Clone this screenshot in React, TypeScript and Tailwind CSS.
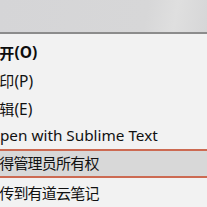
import React from "react";

const rows: { cjk: string; latin?: string; h: string; bold?: boolean; hl?: boolean }[] = [
  { cjk: "打开", latin: "(O)", h: "h-[28px]", bold: true },
  { cjk: "打印", latin: "(P)", h: "h-[29px]" },
  { cjk: "编辑", latin: "(E)", h: "h-[27px]" },
  { cjk: "", latin: "Open with Sublime Text", h: "h-[26px]" },
  { cjk: "取得管理员所有权", h: "h-[29px]", hl: true },
  { cjk: "上传到有道云笔记", h: "h-[30px]" },
];

export default function App() {
  return (
    <div
      className="w-[207px] h-[207px] overflow-hidden bg-[#f2f2f2] flex flex-col"
      style={{ fontFamily: '"Noto Sans", "Noto Sans CJK SC", sans-serif' }}
    >
      <div className="h-[32px] shrink-0 bg-[linear-gradient(100deg,#d5d5d7_0%,#d7d7d8_70%,#dfdfdf_84%,#d6d6d7_100%)]" />
      <div className="h-[2px] shrink-0 bg-[#8c8c8c]" />
      <div className="h-[5px] shrink-0" />
      {rows.map((r) => (
        <div
          key={r.cjk + (r.latin ?? "")}
          className={
            r.hl
              ? `${r.h} shrink-0 flex items-center bg-[#d8d8d8] border-y-2 border-[#cc6a52]`
              : `${r.h} shrink-0 flex items-center`
          }
        >
          <div
            className={
              r.cjk
                ? r.bold
                  ? "ml-[-15px] flex items-center whitespace-nowrap leading-none font-bold text-[#0d0d0d]"
                  : "ml-[-15px] flex items-center whitespace-nowrap leading-none text-[#111]"
                : "ml-[-12px] flex items-center whitespace-nowrap leading-none text-[#111]"
            }
          >
            {r.cjk && <span className="text-[15px] tracking-[-0.8px]">{r.cjk}</span>}
            {r.latin && (
              <span className={r.cjk ? "text-[15.5px] ml-[1px]" : "text-[15.3px]"}>{r.latin}</span>
            )}
          </div>
        </div>
      ))}
    </div>
  );
}
